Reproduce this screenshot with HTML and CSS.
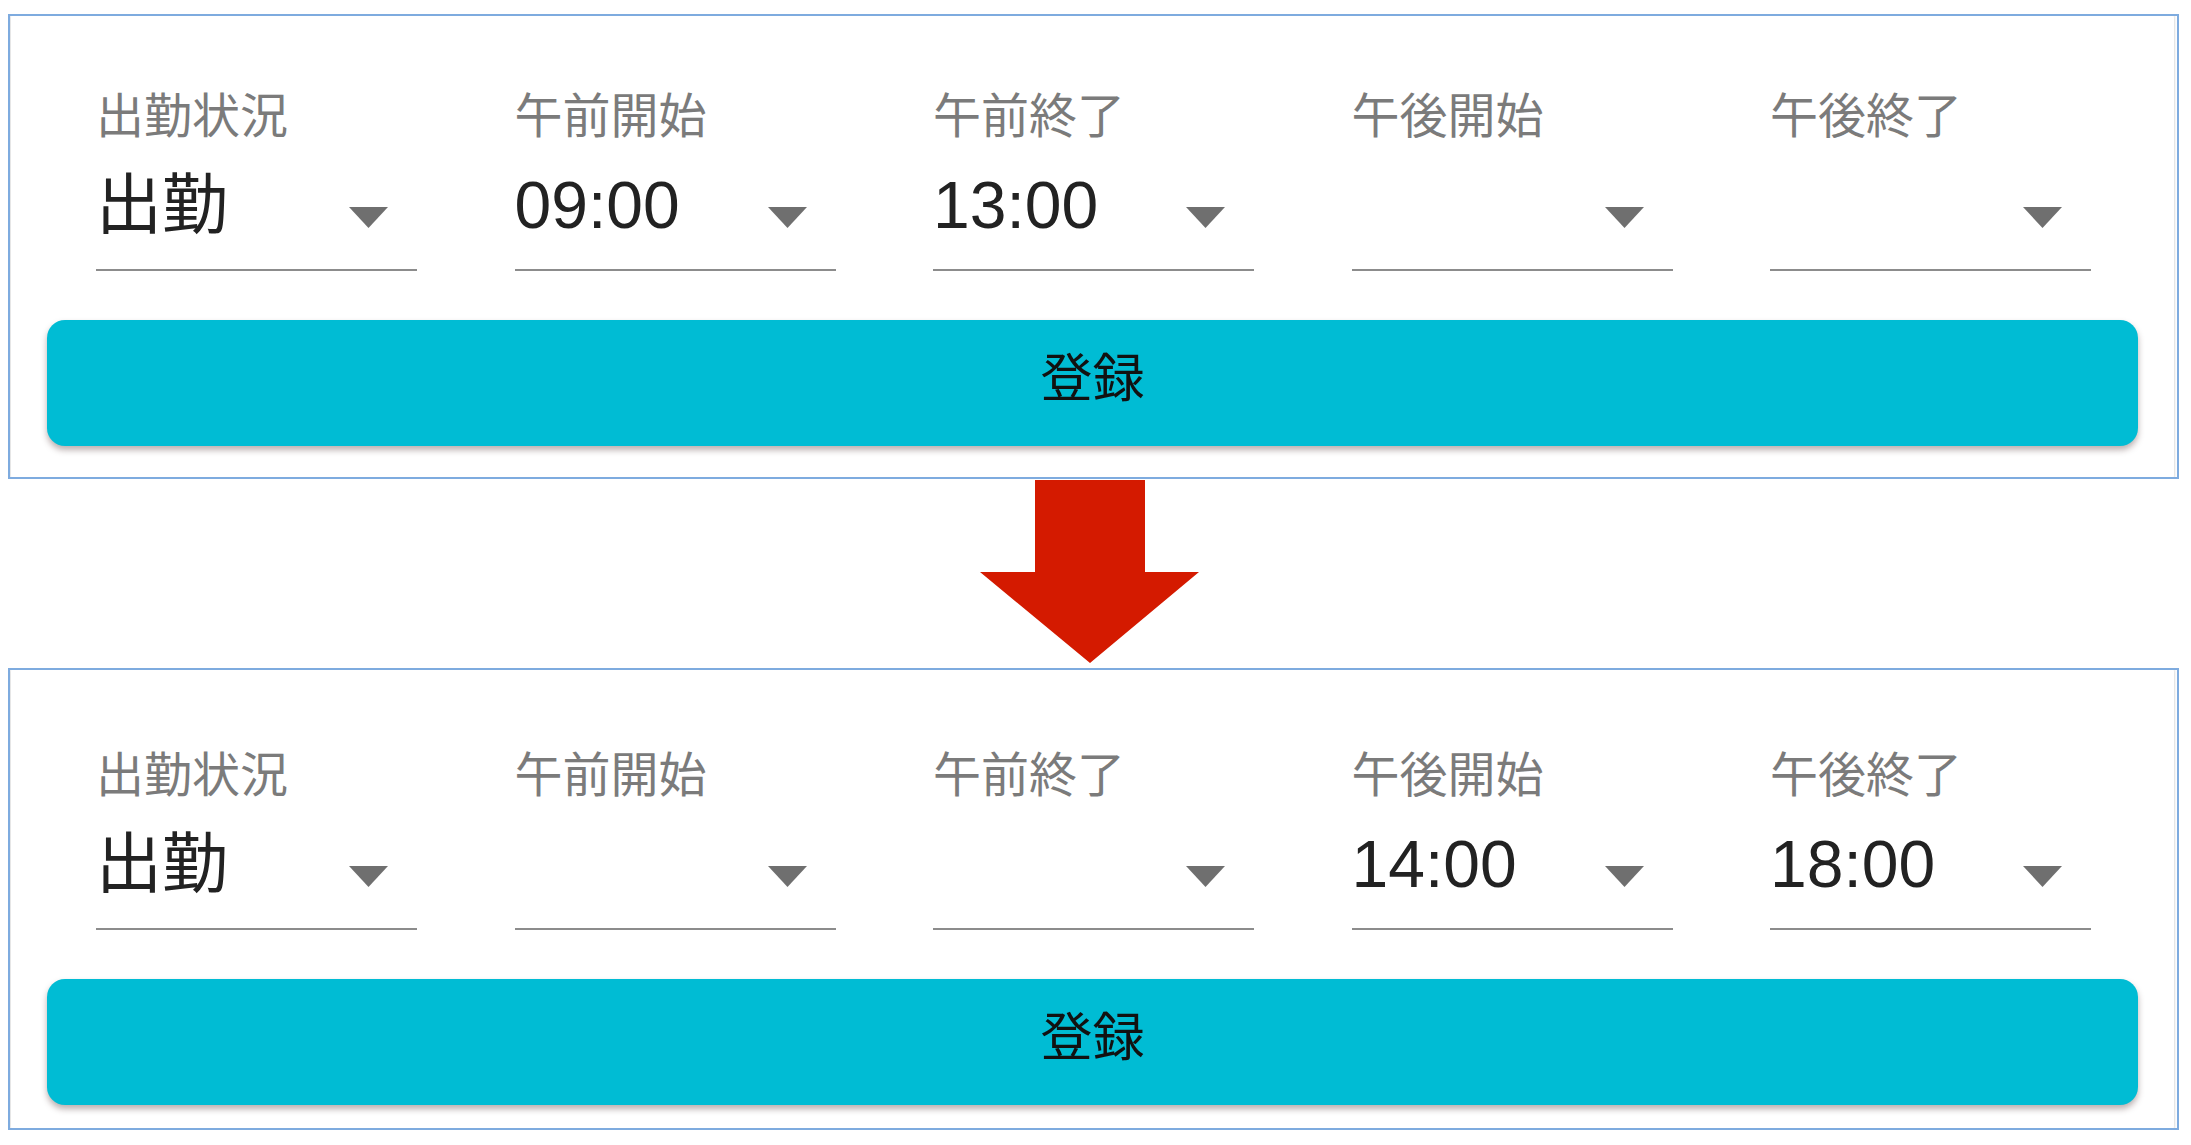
FILE: index.html
```html
<!DOCTYPE html>
<html lang="ja">
<head>
<meta charset="utf-8">
<title>勤務登録</title>
<link rel="stylesheet" href="styles.css">
</head>
<body>
<div class="page">
  <section class="panel panel-top">
    <div class="card">
      <div class="fields">
        <div class="field">
          <div class="label">出勤状況</div>
          <div class="select"><span class="value">出勤</span><svg class="caret" viewBox="0 0 39 21"><polygon points="0,0 39,0 19.5,21"/></svg></div>
        </div>
        <div class="field">
          <div class="label">午前開始</div>
          <div class="select"><span class="value">09:00</span><svg class="caret" viewBox="0 0 39 21"><polygon points="0,0 39,0 19.5,21"/></svg></div>
        </div>
        <div class="field">
          <div class="label">午前終了</div>
          <div class="select"><span class="value">13:00</span><svg class="caret" viewBox="0 0 39 21"><polygon points="0,0 39,0 19.5,21"/></svg></div>
        </div>
        <div class="field">
          <div class="label">午後開始</div>
          <div class="select"><span class="value"></span><svg class="caret" viewBox="0 0 39 21"><polygon points="0,0 39,0 19.5,21"/></svg></div>
        </div>
        <div class="field">
          <div class="label">午後終了</div>
          <div class="select"><span class="value"></span><svg class="caret" viewBox="0 0 39 21"><polygon points="0,0 39,0 19.5,21"/></svg></div>
        </div>
      </div>
      <button class="submit" type="button">登録</button>
    </div>
  </section>

  <div class="arrow-row">
    <svg class="arrow" width="219" height="184" viewBox="0 0 219 184"><polygon points="55,0 165,0 165,92 219,92 110,183 0,92 55,92"/></svg>
  </div>

  <section class="panel panel-bottom">
    <div class="card">
      <div class="fields">
        <div class="field">
          <div class="label">出勤状況</div>
          <div class="select"><span class="value">出勤</span><svg class="caret" viewBox="0 0 39 21"><polygon points="0,0 39,0 19.5,21"/></svg></div>
        </div>
        <div class="field">
          <div class="label">午前開始</div>
          <div class="select"><span class="value"></span><svg class="caret" viewBox="0 0 39 21"><polygon points="0,0 39,0 19.5,21"/></svg></div>
        </div>
        <div class="field">
          <div class="label">午前終了</div>
          <div class="select"><span class="value"></span><svg class="caret" viewBox="0 0 39 21"><polygon points="0,0 39,0 19.5,21"/></svg></div>
        </div>
        <div class="field">
          <div class="label">午後開始</div>
          <div class="select"><span class="value">14:00</span><svg class="caret" viewBox="0 0 39 21"><polygon points="0,0 39,0 19.5,21"/></svg></div>
        </div>
        <div class="field">
          <div class="label">午後終了</div>
          <div class="select"><span class="value">18:00</span><svg class="caret" viewBox="0 0 39 21"><polygon points="0,0 39,0 19.5,21"/></svg></div>
        </div>
      </div>
      <button class="submit" type="button">登録</button>
    </div>
  </section>
</div>
</body>
</html>
```

FILE: styles.css
```css
html, body {
  margin: 0;
  padding: 0;
  background: #ffffff;
}

body {
  font-family: "Liberation Sans", "Noto Sans CJK JP", sans-serif;
  color: #212121;
}

.page {
  width: 2171px;
  padding: 14px 0 0 8px;
}

.panel {
  border: 2px solid #7eabdf;
  background: #ffffff;
  overflow: hidden;
}

.card {
  margin: -8px 3px -8px 1px;
  border-radius: 10px;
  box-shadow: 0 0 3px rgba(0, 0, 0, 0.28);
  background: #ffffff;
  padding-left: 36px;
  padding-right: 34px;
}

.panel-top .card {
  padding-top: 80px;
  padding-bottom: 39px;
}

.panel-bottom .card {
  padding-top: 85px;
  padding-bottom: 31px;
}

.fields {
  display: grid;
  grid-template-columns: repeat(5, 321px);
  column-gap: 97.5px;
  margin-left: 49px;
}

.field {
  display: flex;
  flex-direction: column;
}

.label {
  font-size: 48px;
  line-height: 58px;
  color: #7b7b7b;
  white-space: nowrap;
}

.select {
  display: flex;
  justify-content: space-between;
  align-items: flex-start;
  height: 76px;
  margin-top: 21px;
  padding-bottom: 26px;
  border-bottom: 2px solid #8c8c8c;
}

.value {
  font-size: 66px;
  line-height: 76px;
  color: #222222;
  white-space: nowrap;
}

.caret {
  width: 39px;
  height: 21px;
  margin-top: 40px;
  margin-right: 29px;
  fill: #6f6f6f;
  flex: none;
}

.submit {
  display: flex;
  align-items: center;
  justify-content: center;
  width: 2091px;
  height: 126px;
  margin-top: 49px;
  padding: 0 0 8px 0;
  border: none;
  border-radius: 18px;
  background: #00bcd4;
  box-shadow: 0 4px 6px rgba(60, 30, 30, 0.35);
  font-family: "Liberation Sans", "Noto Sans CJK JP", sans-serif;
  font-size: 52px;
  line-height: 60px;
  color: #111111;
}

.arrow-row {
  height: 189px;
  display: flex;
  align-items: flex-start;
}

.arrow {
  display: block;
  margin-left: 972px;
  margin-top: 1px;
  fill: #d41a00;
}
```
